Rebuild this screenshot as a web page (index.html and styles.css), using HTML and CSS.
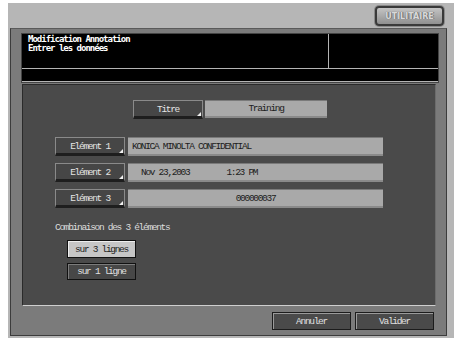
FILE: index.html
```html
<!DOCTYPE html>
<html lang="fr">
<head>
<meta charset="utf-8">
<link rel="stylesheet" href="styles.css">
</head>
<body>
<div class="screen">
  <div class="topbar">
    <div class="util">UTILITAIRE</div>
  </div>
  <div class="panel">
    <div class="header">
      <div class="hrow">
        <div class="msg">Modification Annotation<br>Entrer les données</div>
        <div class="side"></div>
      </div>
      <div class="hbar"></div>
    </div>
    <div class="inner">
      <div class="titre-row">
        <div class="btn key">Titre</div>
        <div class="field center">Training</div>
      </div>
      <div class="elements">
        <div class="erow">
          <div class="btn key">Elément 1</div>
          <div class="field">KONICA MINOLTA CONFIDENTIAL</div>
        </div>
        <div class="erow">
          <div class="btn key">Elément 2</div>
          <div class="field date"><span>Nov 23,2003</span><span>1:23 PM</span></div>
        </div>
        <div class="erow">
          <div class="btn key">Elément 3</div>
          <div class="field center">000000037</div>
        </div>
      </div>
      <div class="combo-label">Combinaison des 3 éléments</div>
      <div class="combo">
        <div class="opt selected">sur 3 lignes</div>
        <div class="opt">sur 1 ligne</div>
      </div>
    </div>
    <div class="footer">
      <div class="fbtn">Annuler</div>
      <div class="fbtn">Valider</div>
    </div>
  </div>
</div>
</body>
</html>
```

FILE: styles.css
```css
* { box-sizing: border-box; }
html, body { margin: 0; padding: 0; background: #ffffff; }
body {
  font-family: "Liberation Mono", "DejaVu Sans Mono", monospace;
  font-size: 9.5px;
  letter-spacing: -1.3px;
}
.screen {
  margin: 3px 0 0 8px;
  width: 446px;
  height: 335px;
  background: #b6b6b6;
  display: flex;
  flex-direction: column;
}
.topbar {
  height: 25px;
  display: flex;
  justify-content: flex-end;
  padding: 3px 10px 0 0;
}
.util {
  width: 69px;
  height: 20px;
  border: 2px solid #3a3a3a;
  border-radius: 4px;
  background: linear-gradient(#c4c4c4, #909090);
  color: #d8d8d8;
  font-family: "DejaVu Sans", sans-serif;
  font-size: 8px;
  font-weight: bold;
  letter-spacing: 0;
  text-shadow: 0 0 1px #666, 1px 0 0 #777;
  display: flex;
  align-items: center;
  justify-content: center;
  box-shadow: 0 0 0 1px #8a8a8a;
}
.panel {
  margin-left: 2px;
  width: 437px;
  height: 308px;
  background: #7b7b7b;
  border: 1px solid #3c3c3c;
  border-top-color: #5a5a5a;
  display: flex;
  flex-direction: column;
  padding: 4px 0 0 10px;
}
.header {
  width: 418px;
  background: #000;
  border: 1px solid #444;
}
.hrow {
  display: flex;
  height: 35px;
  border-bottom: 1px solid #b4b4b4;
}
.msg {
  width: 307px;
  border-right: 1px solid #b4b4b4;
  color: #ffffff;
  font-family: "DejaVu Sans Mono", monospace;
  font-size: 9px;
  letter-spacing: -1px;
  font-weight: bold;
  line-height: 9px;
  padding: 1px 0 0 6px;
}
.side { flex: 1; }
.hbar {
  height: 13px;
  border-bottom: 1px solid #b4b4b4;
}
.inner {
  margin: 1px 0 0 1px;
  width: 414px;
  height: 222px;
  background: #4a4a4a;
  border: 1px solid #2a2a2a;
  border-bottom-color: #cfcfcf;
  border-right-color: #6c6c6c;
  display: flex;
  flex-direction: column;
}
.titre-row {
  display: flex;
  margin: 15px 0 0 110px;
  gap: 2px;
}
.btn {
  position: relative;
  width: 70px;
  height: 19px;
  background: #464646;
  border: 1px solid #8a8a8a;
  border-bottom: 3px solid #1e1e1e;
  color: #e4e4e4;
  display: flex;
  align-items: center;
  justify-content: center;
  padding-top: 1px;
}
.key::after {
  content: "";
  position: absolute;
  right: 1px;
  bottom: 0;
  width: 0;
  height: 0;
  border-left: 4px solid transparent;
  border-bottom: 4px solid #f0f0f0;
}
.field {
  height: 19px;
  background: #a9a9a9;
  border-top: 1px solid #7a7a7a;
  border-bottom: 2px solid #8a8a8a;
  color: #1c1c1c;
  display: flex;
  align-items: center;
  padding-left: 4px;
}
.titre-row .field { width: 122px; height: 18px; }
.center { justify-content: center; padding-left: 0; }
.elements {
  margin: 18px 0 0 32px;
  display: flex;
  flex-direction: column;
  gap: 7px;
}
.erow {
  display: flex;
  gap: 3px;
}
.erow .field { width: 255px; }
.date { padding-left: 13px; gap: 37px; }
.combo-label {
  margin: 15px 0 0 32px;
  color: #dcdcdc;
  line-height: 10px;
}
.combo {
  margin: 7px 0 0 44px;
  display: flex;
  flex-direction: column;
  gap: 5px;
}
.opt {
  width: 69px;
  height: 18px;
  border: 1px solid #111;
  background: #474747;
  color: #e0e0e0;
  display: flex;
  align-items: center;
  justify-content: center;
  box-shadow: inset 1px 1px 0 #7c7c7c;
}
.opt + .opt { height: 17px; }
.opt.selected {
  background: #c6c6c6;
  color: #222;
  box-shadow: inset 1px 1px 0 #eeeeee;
}
.footer {
  display: flex;
  justify-content: flex-end;
  gap: 4px;
  margin-top: 6px;
  padding-right: 12px;
}
.fbtn {
  width: 79px;
  height: 18px;
  background: #4a4a4a;
  border: 1px solid #1c1c1c;
  box-shadow: inset 1px 1px 0 #9a9a9a;
  color: #e0e0e0;
  display: flex;
  align-items: center;
  justify-content: center;
}
```
